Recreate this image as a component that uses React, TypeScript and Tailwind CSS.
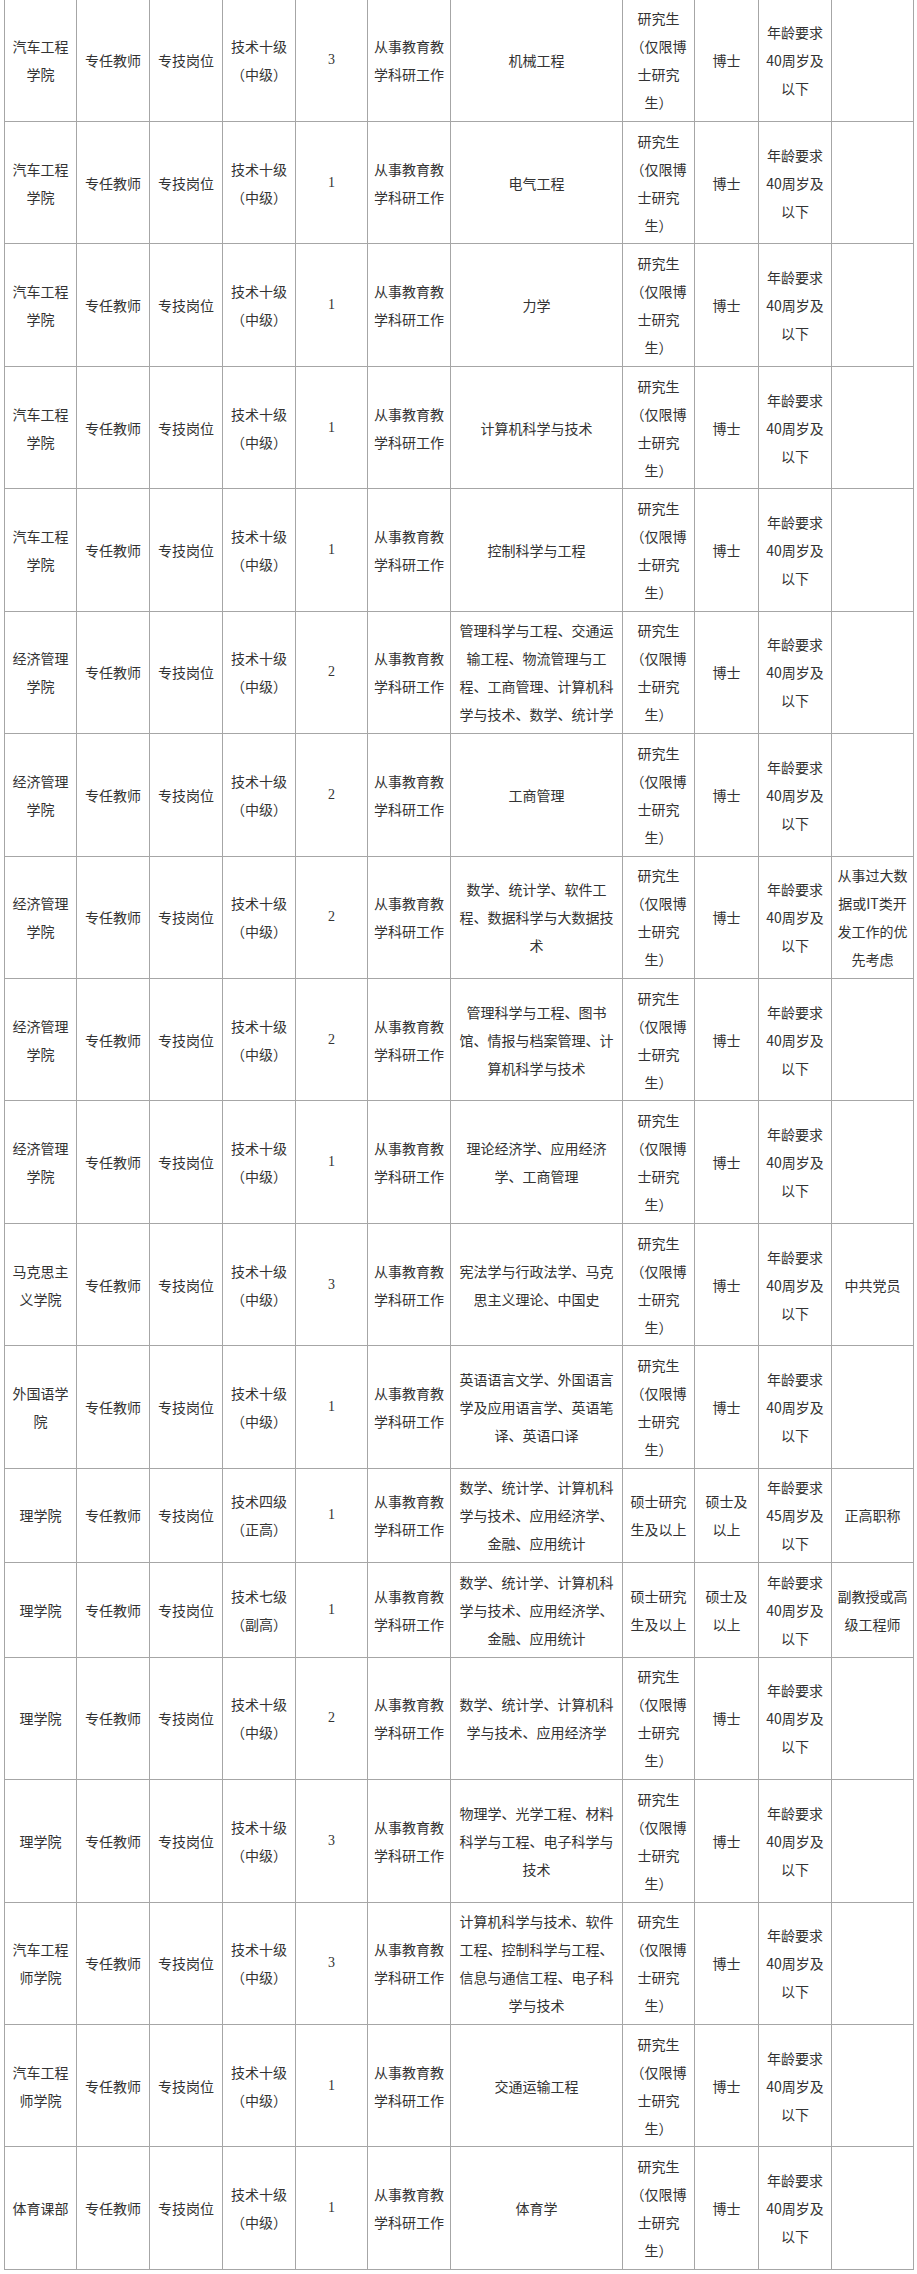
import React from 'react'

type Row = {
  college: string[]
  level: string[]
  count: string
  major: string[]
  edu?: string[]
  degree?: string[]
  age?: string[]
  remark?: string[]
}

const CAR = ['汽车工程', '学院']
const ECON = ['经济管理', '学院']
const SCI = ['理学院']
const CAR_ENG = ['汽车工程', '师学院']
const MID = ['技术十级', '（中级）']
const JOB = ['从事教育教', '学科研工作']
const PHD_EDU = ['研究生', '（仅限博', '士研究', '生）']
const PHD = ['博士']
const AGE40 = ['年龄要求', '40周岁及', '以下']
const MASTER_EDU = ['硕士研究', '生及以上']
const MASTER = ['硕士及', '以上']
const SCI_MAJOR = ['数学、统计学、计算机科', '学与技术、应用经济学、', '金融、应用统计']

const rows: Row[] = [
  { college: CAR, level: MID, count: '3', major: ['机械工程'] },
  { college: CAR, level: MID, count: '1', major: ['电气工程'] },
  { college: CAR, level: MID, count: '1', major: ['力学'] },
  { college: CAR, level: MID, count: '1', major: ['计算机科学与技术'] },
  { college: CAR, level: MID, count: '1', major: ['控制科学与工程'] },
  {
    college: ECON,
    level: MID,
    count: '2',
    major: ['管理科学与工程、交通运', '输工程、物流管理与工', '程、工商管理、计算机科', '学与技术、数学、统计学'],
  },
  { college: ECON, level: MID, count: '2', major: ['工商管理'] },
  {
    college: ECON,
    level: MID,
    count: '2',
    major: ['数学、统计学、软件工', '程、数据科学与大数据技', '术'],
    remark: ['从事过大数', '据或IT类开', '发工作的优', '先考虑'],
  },
  {
    college: ECON,
    level: MID,
    count: '2',
    major: ['管理科学与工程、图书', '馆、情报与档案管理、计', '算机科学与技术'],
  },
  { college: ECON, level: MID, count: '1', major: ['理论经济学、应用经济', '学、工商管理'] },
  {
    college: ['马克思主', '义学院'],
    level: MID,
    count: '3',
    major: ['宪法学与行政法学、马克', '思主义理论、中国史'],
    remark: ['中共党员'],
  },
  {
    college: ['外国语学', '院'],
    level: MID,
    count: '1',
    major: ['英语语言文学、外国语言', '学及应用语言学、英语笔', '译、英语口译'],
  },
  {
    college: SCI,
    level: ['技术四级', '（正高）'],
    count: '1',
    major: SCI_MAJOR,
    edu: MASTER_EDU,
    degree: MASTER,
    age: ['年龄要求', '45周岁及', '以下'],
    remark: ['正高职称'],
  },
  {
    college: SCI,
    level: ['技术七级', '（副高）'],
    count: '1',
    major: SCI_MAJOR,
    edu: MASTER_EDU,
    degree: MASTER,
    remark: ['副教授或高', '级工程师'],
  },
  { college: SCI, level: MID, count: '2', major: ['数学、统计学、计算机科', '学与技术、应用经济学'] },
  {
    college: SCI,
    level: MID,
    count: '3',
    major: ['物理学、光学工程、材料', '科学与工程、电子科学与', '技术'],
  },
  {
    college: CAR_ENG,
    level: MID,
    count: '3',
    major: ['计算机科学与技术、软件', '工程、控制科学与工程、', '信息与通信工程、电子科', '学与技术'],
  },
  { college: CAR_ENG, level: MID, count: '1', major: ['交通运输工程'] },
  { college: ['体育课部'], level: MID, count: '1', major: ['体育学'] },
]

// 列宽 (px)
const widths = [72, 73, 73, 73, 72, 83, 172, 72, 64, 73, 82]

const Cell: React.FC<{ lines?: string[]; serif?: boolean }> = ({ lines = [], serif }) => (
  <td
    className={
      'border border-[#a6a6a6] px-0 py-[4.725px] text-center align-middle whitespace-nowrap ' +
      (serif ? "font-['Liberation_Serif',serif]" : '')
    }
  >
    {lines.map((line, i) => (
      <div key={i}>{line}</div>
    ))}
  </td>
)

const App: React.FC = () => {
  return (
    <div className="w-[917px] h-[2274px] overflow-hidden bg-white font-['Noto_Sans_CJK_SC','Microsoft_YaHei',sans-serif] text-[14px] leading-[28px] text-[#333333]">
      <table className="table-fixed border-collapse w-[910px] ml-[4px] mt-[-1.5px]">
        <colgroup>
          {widths.map((w, i) => (
            <col key={i} style={{ width: w }} />
          ))}
        </colgroup>
        <tbody>
          {rows.map((r, index) => (
            <tr key={`job-row-${index}`}>
              <Cell lines={r.college} />
              <Cell lines={['专任教师']} />
              <Cell lines={['专技岗位']} />
              <Cell lines={r.level} />
              <Cell lines={[r.count]} serif />
              <Cell lines={JOB} />
              <Cell lines={r.major} />
              <Cell lines={r.edu ?? PHD_EDU} />
              <Cell lines={r.degree ?? PHD} />
              <Cell lines={r.age ?? AGE40} />
              <Cell lines={r.remark} />
            </tr>
          ))}
        </tbody>
      </table>
    </div>
  )
}

export default App
